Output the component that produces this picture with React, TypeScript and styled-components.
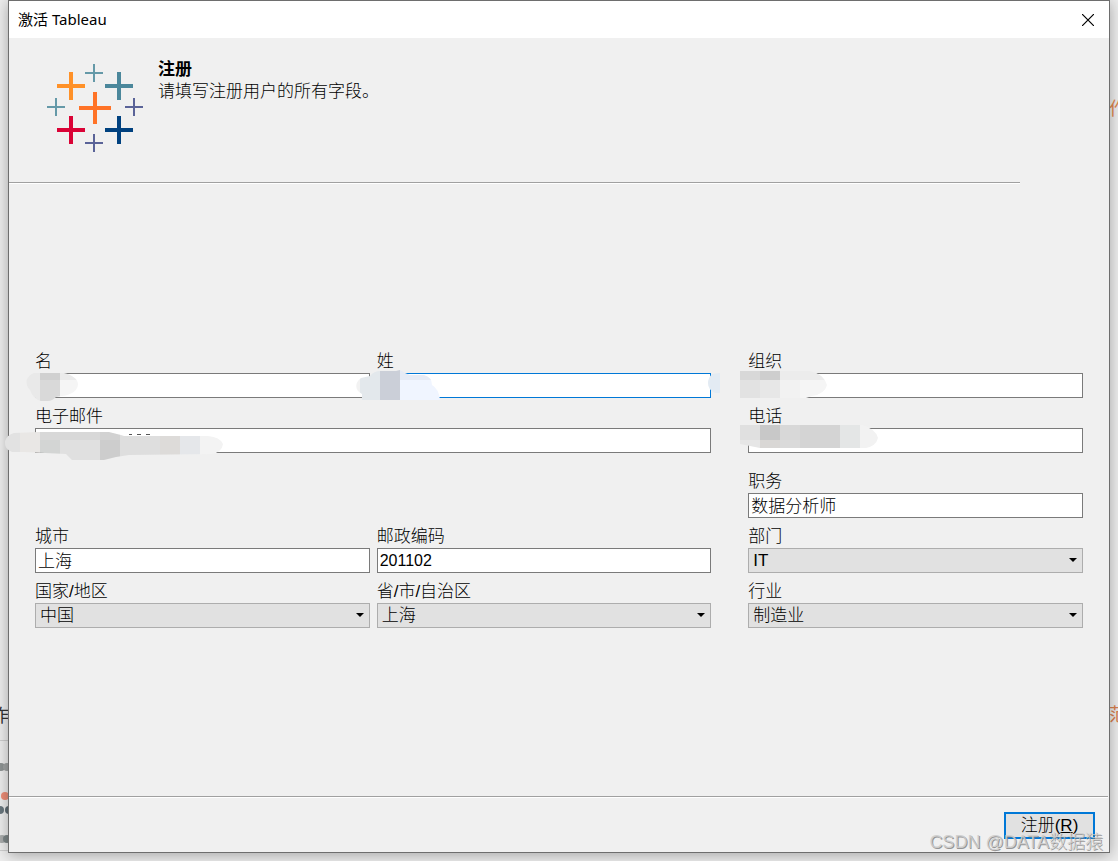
import React from 'react';
import styled, { createGlobalStyle } from 'styled-components';

const GlobalStyle = createGlobalStyle`
  * { box-sizing: border-box; }
  body {
    margin: 0;
    background: #eeeeee;
    color: #000;
    font-family: "Liberation Sans", "Noto Sans CJK SC", sans-serif;
    font-size: 17px;
    font-weight: 300;
  }
`;

const Desktop = styled.div`
  position: relative;
  display: flex;
  min-height: 100vh;
  padding: 0 8px 8px;
  overflow: hidden;
`;

const BackdropText = styled.span<{ $side: 'left' | 'right'; $top: number; $color: string }>`
  position: absolute;
  top: ${(p) => p.$top}px;
  ${(p) => (p.$side === 'left' ? 'left: -9px;' : 'right: -9px;')}
  color: ${(p) => p.$color};
  font-size: 18px;
  font-weight: 400;
  line-height: 24px;
`;

const BackdropMarks = styled.svg`
  position: absolute;
  left: 0;
  bottom: 0;
`;

const Dialog = styled.section`
  position: relative;
  flex: 1;
  display: flex;
  flex-direction: column;
  min-width: 0;
  background: #f0f0f0;
  border: 1px solid #6e6e6e;
  box-shadow: 0 2px 14px rgba(0, 0, 0, 0.32);
`;

const TitleBar = styled.header`
  display: flex;
  align-items: center;
  justify-content: space-between;
  height: 37px;
  padding: 0 15px 0 9px;
  background: #fff;
`;

const Title = styled.h1`
  margin: 0;
  padding-bottom: 2px;
  font: 400 15px/22px "Noto Sans", "Noto Sans CJK SC", sans-serif;
`;

const CloseButton = styled.button`
  display: flex;
  padding: 0;
  border: 0;
  background: none;
`;

const Intro = styled.div`
  display: flex;
  gap: 15px;
  height: 144px;
  padding: 21px 38px 0;
`;

const Logo = styled.svg`
  flex: none;
  margin-top: 5px;
`;

const Heading = styled.h2`
  margin: 0;
  font-size: 17px;
  font-weight: 700;
  line-height: 22px;
`;

const Lead = styled.p`
  margin: 0;
  line-height: 22px;
`;

const Rule = styled.hr<{ $inset?: number }>`
  width: auto;
  height: 2px;
  margin: 0 ${(p) => p.$inset ?? 0}px 0 0;
  border: 0;
  border-top: 1px solid #a0a0a0;
  border-bottom: 1px solid #fff;
`;

const Form = styled.form`
  flex: 1;
  display: flex;
  flex-direction: column;
`;

const Fields = styled.div`
  flex: 1;
  display: grid;
  grid-template-columns: 1fr 7px 1fr 37px 1fr;
  align-content: start;
  row-gap: 5px;
  padding: 164px 26px 0;
`;

const Field = styled.div<{ $column: string; $row: number }>`
  position: relative;
  grid-column: ${(p) => p.$column};
  grid-row: ${(p) => p.$row};
  padding-top: ${(p) => (p.$row === 3 ? 10 : 0)}px;
`;

const Label = styled.label`
  display: block;
  padding-top: 2px;
  line-height: 23px;
`;

const Control = styled.div`
  position: relative;
`;

const TextBox = styled.input<{ $active?: boolean; $latin?: boolean }>`
  display: block;
  width: 100%;
  height: 25px;
  padding: 0 2px ${(p) => (p.$latin ? 0 : 3)}px;
  border: 1px solid ${(p) => (p.$active ? '#0078d7' : '#7a7a7a')};
  border-radius: 0;
  outline: none;
  background: #fff;
  color: #000;
  font: inherit;
  font-size: ${(p) => (p.$latin ? 16 : 17)}px;
`;

const Select = styled.select`
  display: block;
  width: 100%;
  height: 25px;
  padding: 0 20px 1px 4px;
  appearance: none;
  border: 1px solid #adadad;
  border-radius: 0;
  outline: none;
  background: #e1e1e1;
  color: #000;
  font: inherit;
`;

const Arrow = styled.svg`
  position: absolute;
  top: 10px;
  right: 6px;
  pointer-events: none;
`;

const Smudge = styled.svg<{ $left?: number; $right?: number; $top: number }>`
  position: absolute;
  z-index: 1;
  top: ${(p) => p.$top}px;
  ${(p) => (p.$right !== undefined ? `right: ${p.$right}px;` : `left: ${p.$left}px;`)}
  pointer-events: none;
`;

const Footer = styled.footer`
  display: flex;
  justify-content: flex-end;
  height: 54px;
  padding: 14px 14px 0;
`;

const SubmitButton = styled.button`
  width: 91px;
  height: 27px;
  padding: 0;
  border: 2px solid #0078d7;
  background: #e1e1e1;
  color: #000;
  font: inherit;
  line-height: 22px;
`;

const Watermark = styled.div`
  position: absolute;
  right: 15px;
  bottom: 7px;
  color: rgba(205, 205, 205, 0.9);
  font-size: 18px;
  font-weight: 300;
  line-height: 24px;
  text-shadow: 1px 1px 0 rgba(120, 120, 120, 0.75);
  pointer-events: none;
`;

const crosses: [number, number, number, number, string][] = [
  [47, 9, 9, 2, '#6599a8'],
  [24, 22, 14, 4, '#ff9128'],
  [72, 22, 14, 4, '#4b879b'],
  [9, 43, 9, 2, '#6599a8'],
  [48, 44, 16, 4, '#ff7327'],
  [87, 43, 9, 2, '#5a6398'],
  [24, 66, 14, 4, '#da0336'],
  [72, 66, 14, 4, '#00417f'],
  [47, 79, 9, 2, '#5a6398'],
];

type Block = [number, number, number, number, string];

const Mosaic = ({ blocks }: { blocks: Block[] }) => (
  <>
    {blocks.map(([x, y, w, h, fill], i) => (
      <rect key={i} x={x} y={y} width={w} height={h} fill={fill} />
    ))}
  </>
);

type FieldProps = { id: string; label: string; column: string; row: number; children?: React.ReactNode };

const TextField = ({
  id, label, column, row, value = '', type = 'text', active, latin, children,
}: FieldProps & { value?: string; type?: string; active?: boolean; latin?: boolean }) => (
  <Field $column={column} $row={row}>
    <Label htmlFor={id}>{label}</Label>
    <Control>
      <TextBox id={id} type={type} defaultValue={value} $active={active} $latin={latin} />
      {children}
    </Control>
  </Field>
);

const SelectField = ({ id, label, column, row, value }: FieldProps & { value: string }) => (
  <Field $column={column} $row={row}>
    <Label htmlFor={id}>{label}</Label>
    <Control>
      <Select id={id} defaultValue={value}>
        <option>{value}</option>
      </Select>
      <Arrow width="8" height="4" viewBox="0 0 8 4" aria-hidden="true">
        <path d="M0 0h8L4 4z" fill="#000" />
      </Arrow>
    </Control>
  </Field>
);

export default function App() {
  return (
    <>
      <GlobalStyle />
      <Desktop>
        <BackdropText $side="left" $top={704} $color="#333">作</BackdropText>
        <BackdropText $side="right" $top={97} $color="#e08850">作</BackdropText>
        <BackdropText $side="right" $top={703} $color="#d98050">范</BackdropText>
        <BackdropMarks width="10" height="125" aria-hidden="true">
          <path d="M0 4.500h10M0 114.500h10" stroke="#cfcfcf" />
          <circle cx="1" cy="31" r="4" fill="#8f9494" />
          <circle cx="7" cy="31" r="4" fill="#a2a5a5" />
          <circle cx="5" cy="60" r="4" fill="#ee8e78" />
          <circle cx="0" cy="74" r="4" fill="#69767d" />
          <circle cx="9" cy="74" r="4" fill="#5f6c73" />
          <circle cx="2" cy="103" r="4" fill="#aaadad" />
          <circle cx="7" cy="103" r="4" fill="#7e8788" />
        </BackdropMarks>
        <Dialog aria-labelledby="dialog-title">
          <TitleBar>
            <Title id="dialog-title">激活 Tableau</Title>
            <CloseButton type="button" aria-label="关闭">
              <svg width="12" height="12" viewBox="0 0 12 12" aria-hidden="true">
                <path d="M0 0l12 12M12 0l-12 12" stroke="#000" strokeWidth="1.200" />
              </svg>
            </CloseButton>
          </TitleBar>
          <Intro>
            <Logo width="96" height="88" viewBox="0 0 96 88" role="img" aria-label="Tableau">
              {crosses.map(([cx, cy, r, w, color], i) => (
                <path
                  key={i}
                  d={`M${cx - r} ${cy}h${2 * r}M${cx} ${cy - r}v${2 * r}`}
                  stroke={color}
                  strokeWidth={w}
                />
              ))}
            </Logo>
            <div>
              <Heading>注册</Heading>
              <Lead>请填写注册用户的所有字段。</Lead>
            </div>
          </Intro>
          <Rule $inset={89} />
          <Form onSubmit={(e) => e.preventDefault()}>
            <Fields>
              <TextField id="first" label="名" column="1" row={1}>
                <Smudge $left={-9} $top={-1} width="52" height="30" aria-hidden="true">
                  <clipPath id="c1"><path d="M8 1H38C46 3 52 7 52 12C52 18 46 23 36 24L30 25Q26 29 22 29H15Q7 27 4 18C-2 12 0 4 8 1Z" /></clipPath>
                  <g clipPath="url(#c1)">
                    <Mosaic blocks={[[0, 0, 14, 30, '#e9e9e9'], [14, 0, 20, 8, '#d0d0d0'], [14, 8, 20, 22, '#d9d9d9'], [34, 0, 18, 8, '#ebebeb'], [34, 8, 18, 22, '#f5f5f5']]} />
                  </g>
                </Smudge>
              </TextField>
              <TextField id="last" label="姓" column="3" row={1} active>
                <Smudge $left={-21} $top={-3} width="84" height="30" aria-hidden="true">
                  <clipPath id="c2"><path d="M6 30V24C-2 20 -1 12 5 8L14 6Q18 1 24 1H40L44 0L49 3L54 5H68Q76 7 76 15Q83 19 84 30Z" /></clipPath>
                  <g clipPath="url(#c2)">
                    <Mosaic blocks={[[0, 0, 4, 30, '#f2f2f2'], [4, 0, 20, 30, '#e3e8ec'], [24, 0, 20, 30, '#cbcfd8'], [44, 0, 40, 10, '#e6ebf5'], [44, 10, 40, 20, '#f0f5ff']]} />
                  </g>
                </Smudge>
                <Smudge $right={-9} $top={0} width="12" height="20" aria-hidden="true">
                  <path d="M4 1L12 0V20H7Q0 17 0 10Q0 5 4 1Z" fill="#e3ebf3" />
                </Smudge>
              </TextField>
              <TextField id="organization" label="组织" column="5" row={1}>
                <Smudge $left={-8} $top={-2} width="87" height="27" aria-hidden="true">
                  <clipPath id="c3"><path d="M0 0H70Q84 3 87 14Q85 23 72 25L66 27H0Z" /></clipPath>
                  <g clipPath="url(#c3)">
                    <Mosaic blocks={[[0, 0, 20, 9, '#d8d8d8'], [20, 0, 20, 9, '#cecece'], [40, 0, 47, 9, '#ececec'], [0, 9, 20, 18, '#e2e2e2'], [20, 9, 20, 18, '#e7e7e7'], [40, 9, 20, 18, '#f2f2f2'], [60, 9, 27, 18, '#f5f5f5']]} />
                  </g>
                </Smudge>
              </TextField>

              <TextField id="email" label="电子邮件" column="1 / 4" row={2} type="email">
                <Smudge $left={-31} $top={3} width="220" height="30" aria-hidden="true">
                  <path d="M125 3.500h3M133 3.500h4M142 3.500h4" stroke="#555" />
                  <clipPath id="c4"><path d="M10 2L35 1H105L117 4L120 5H204Q216 6 219 13Q218 21 208 23L125 24L112 26L100 29H68L62 23L20 21H8Q0 18 1 10Q3 4 10 2Z" /></clipPath>
                  <g clipPath="url(#c4)">
                    <Mosaic blocks={[[0, 0, 16, 30, '#e2e2e2'], [16, 0, 20, 30, '#e9e7e5'], [36, 0, 60, 9, '#d8d8d8'], [36, 9, 20, 21, '#d3d5d4'], [56, 9, 40, 21, '#e0e0e0'], [96, 0, 20, 9, '#d2d2d2'], [96, 9, 20, 21, '#cdcdcd'], [116, 0, 40, 30, '#dedede'], [156, 0, 20, 30, '#dddbd9'], [176, 0, 20, 30, '#e5e7ea'], [196, 0, 24, 30, '#f3f3f3']]} />
                  </g>
                </Smudge>
              </TextField>
              <TextField id="phone" label="电话" column="5" row={2} type="tel">
                <Smudge $left={-8} $top={-3} width="138" height="23" aria-hidden="true">
                  <clipPath id="c5"><path d="M0 0H122Q136 4 138 13Q136 21 126 23H20L0 19Z" /></clipPath>
                  <g clipPath="url(#c5)">
                    <Mosaic blocks={[[0, 0, 20, 15, '#e0e0e0'], [20, 0, 20, 15, '#c8c8c8'], [40, 0, 20, 15, '#d8d8d8'], [60, 0, 40, 23, '#d4d4d4'], [0, 15, 20, 8, '#e6e6e6'], [20, 15, 20, 8, '#d9d7d5'], [40, 15, 20, 8, '#dadada'], [100, 0, 20, 23, '#e4e6e6'], [120, 0, 18, 23, '#f2f2f2']]} />
                  </g>
                </Smudge>
              </TextField>

              <TextField id="title" label="职务" column="5" row={3} value="数据分析师" />

              <TextField id="city" label="城市" column="1" row={4} value="上海" />
              <TextField id="postcode" label="邮政编码" column="3" row={4} value="201102" latin />
              <SelectField id="department" label="部门" column="5" row={4} value="IT" />

              <SelectField id="country" label="国家/地区" column="1" row={5} value="中国" />
              <SelectField id="province" label="省/市/自治区" column="3" row={5} value="上海" />
              <SelectField id="industry" label="行业" column="5" row={5} value="制造业" />
            </Fields>
            <Rule $inset={1} />
            <Footer>
              <SubmitButton type="submit">注册(<u>R</u>)</SubmitButton>
            </Footer>
          </Form>
        </Dialog>
        <Watermark>CSDN @DATA数据猿</Watermark>
      </Desktop>
    </>
  );
}
